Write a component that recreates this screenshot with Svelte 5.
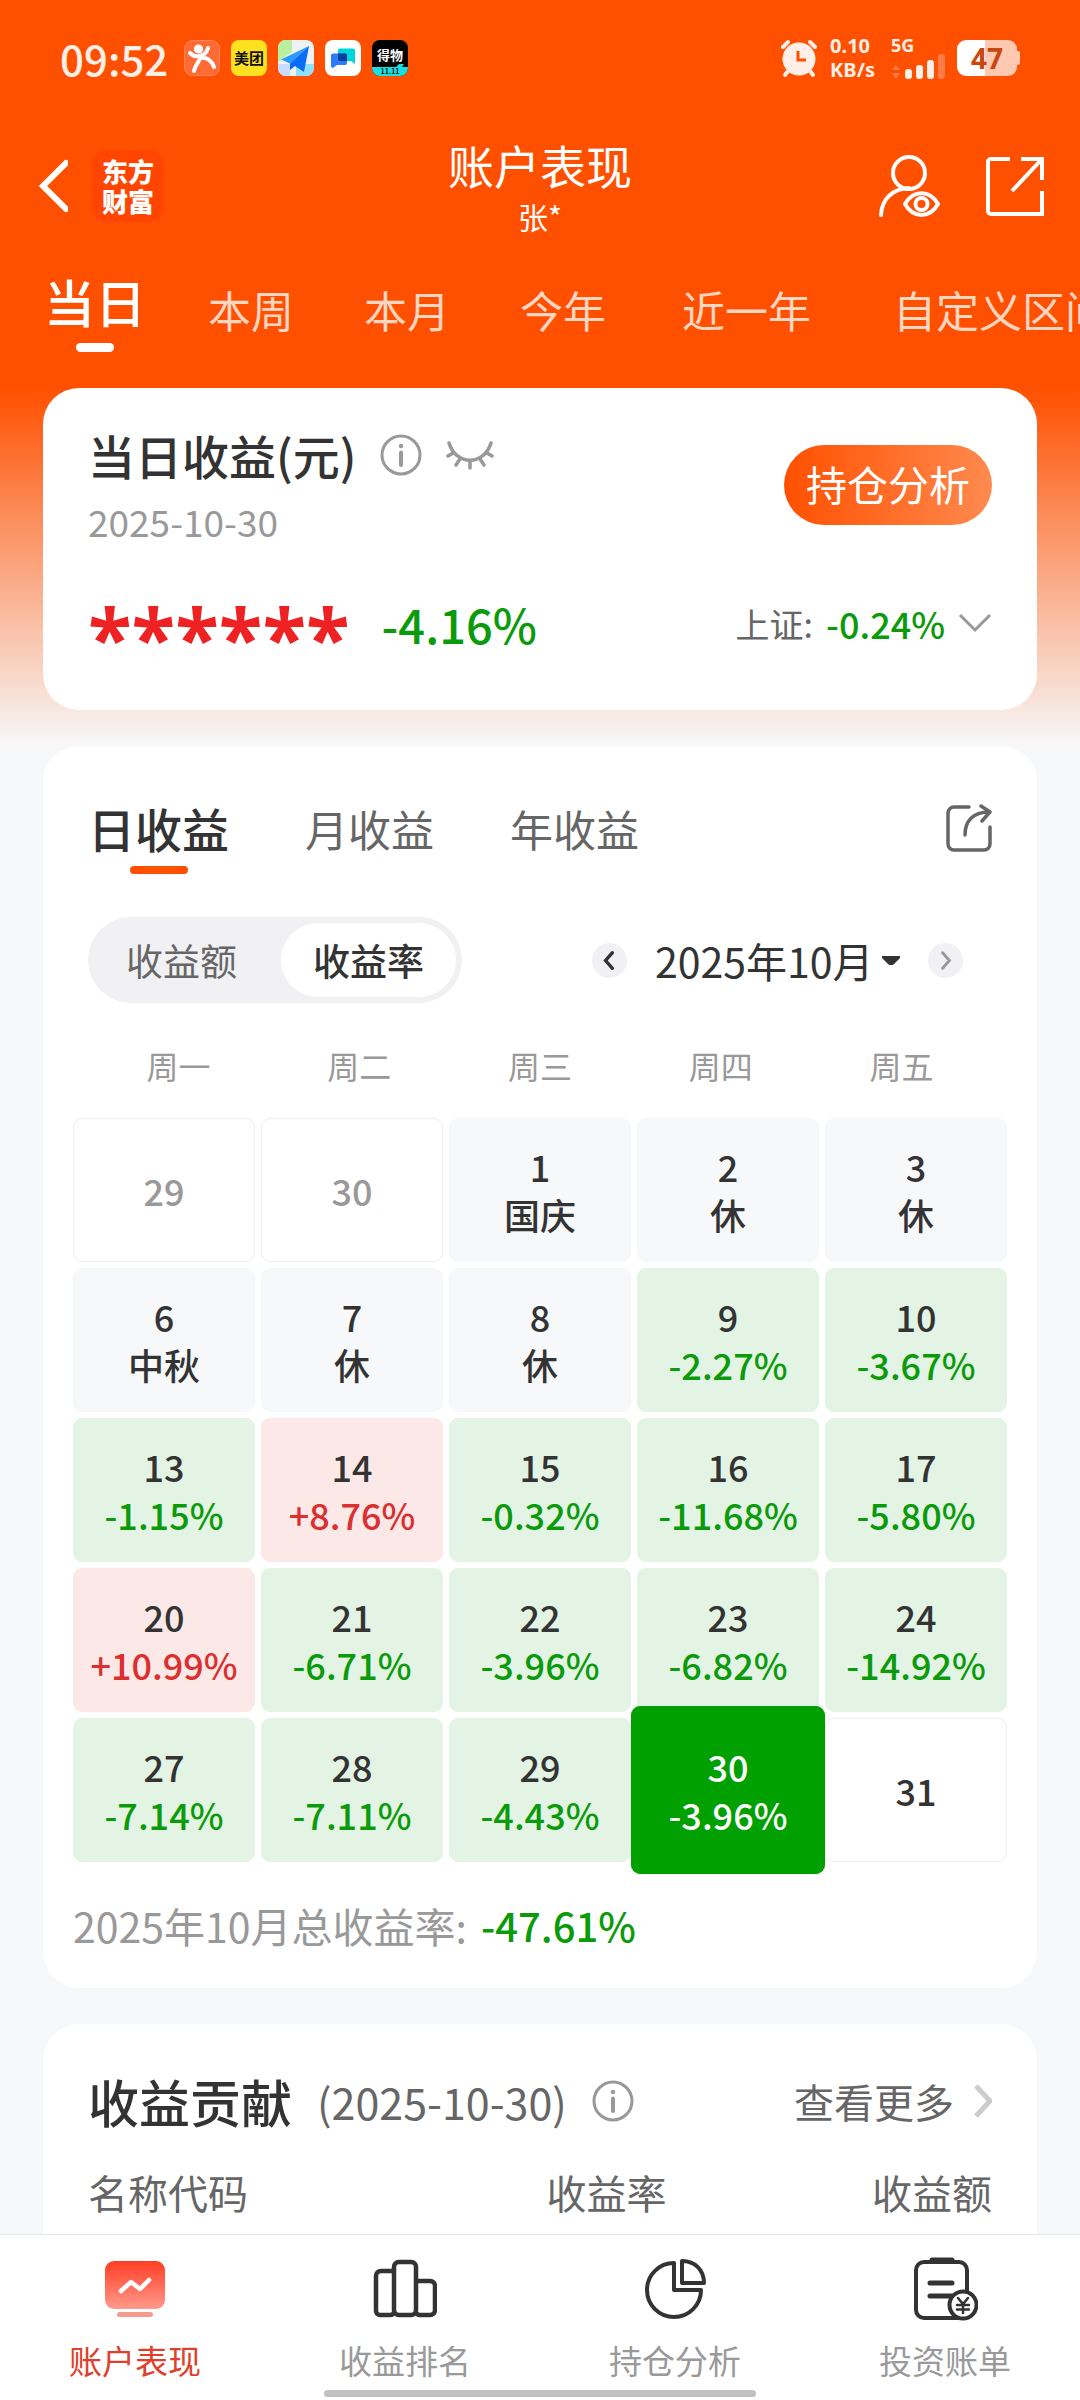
<script lang="ts">
	const ranges = ['当日', '本周', '本月', '今年', '近一年', '自定义区间'];
	const periods = ['日收益', '月收益', '年收益'];
	const modes = ['收益额', '收益率'];
	const weekdays = ['周一', '周二', '周三', '周四', '周五'];

	type Day = { day: number; note?: string; rate?: string; outside?: boolean };

	const days: Day[] = [
		{ day: 29, outside: true },
		{ day: 30, outside: true },
		{ day: 1, note: '国庆' },
		{ day: 2, note: '休' },
		{ day: 3, note: '休' },
		{ day: 6, note: '中秋' },
		{ day: 7, note: '休' },
		{ day: 8, note: '休' },
		{ day: 9, rate: '-2.27%' },
		{ day: 10, rate: '-3.67%' },
		{ day: 13, rate: '-1.15%' },
		{ day: 14, rate: '+8.76%' },
		{ day: 15, rate: '-0.32%' },
		{ day: 16, rate: '-11.68%' },
		{ day: 17, rate: '-5.80%' },
		{ day: 20, rate: '+10.99%' },
		{ day: 21, rate: '-6.71%' },
		{ day: 22, rate: '-3.96%' },
		{ day: 23, rate: '-6.82%' },
		{ day: 24, rate: '-14.92%' },
		{ day: 27, rate: '-7.14%' },
		{ day: 28, rate: '-7.11%' },
		{ day: 29, rate: '-4.43%' },
		{ day: 30, rate: '-3.96%' },
		{ day: 31 }
	];

	let range = $state('当日');
	let period = $state('日收益');
	let mode = $state('收益率');
	let selected = $state(23);

	function dayClass(d: Day): string {
		if (d.outside) return 'outside';
		if (d.note) return 'rest';
		if (!d.rate) return '';
		return d.rate.startsWith('+') ? 'up' : 'down';
	}
</script>

{#snippet infoIcon()}
	<svg width="42" height="42" viewBox="0 0 42 42" fill="none" stroke="#999" stroke-width="3">
		<circle cx="21" cy="21" r="19" />
		<path d="M21 18.500v12.500" stroke-linecap="round" stroke-width="4" />
		<circle cx="21" cy="12" r="2.200" fill="#999" stroke="none" />
	</svg>
{/snippet}

<div class="app">
	<div class="status">
		<div class="status-left">
			<span class="time">09:52</span>
			<svg width="36" height="36" viewBox="0 0 36 36">
				<rect x="0.500" y="0.500" width="35" height="35" rx="8" fill="#ff6a35" stroke="#ff8658" />
				<circle cx="14.500" cy="9" r="4.600" fill="#fff" />
				<path
					d="M6 13c3 3 6 4 10 3 4-1 7-4 8-8M16 16c1 5-5 8-6 15M17 18c6-1 11 3 13 9"
					fill="none"
					stroke="#fff"
					stroke-width="4"
					stroke-linecap="round"
				/>
			</svg>
			<svg width="36" height="36" viewBox="0 0 36 36">
				<rect width="36" height="36" rx="8" fill="#ffe11f" />
				<text class="app-name" x="18" y="24" font-size="15">美团</text>
			</svg>
			<svg width="36" height="36" viewBox="0 0 36 36">
				<rect width="36" height="36" rx="8" fill="#eef1f5" />
				<path d="M8 0h6v12L0 22V8a8 8 0 0 1 8-8z" fill="#b9f0a0" />
				<path d="M18 24h18v4a8 8 0 0 1-8 8H18z" fill="#8fe0ff" />
				<path d="M0 24h12v12H8a8 8 0 0 1-8-8z" fill="#c9dcff" />
				<path d="M31 6L3 19.500l9 4z" fill="#2a9bff" />
				<path d="M31 6L12 23.500V30l5-4 9 6z" fill="#0a6cf5" />
			</svg>
			<svg width="36" height="36" viewBox="0 0 36 36">
				<rect width="36" height="36" rx="8" fill="#fff" />
				<path d="M15 8.500h13a2 2 0 0 1 2 2V24l-4-3H15a2 2 0 0 1-2-2v-8.500a2 2 0 0 1 2-2z" fill="#00d6dc" />
				<path d="M8 13.500h12a2 2 0 0 1 2 2V23a2 2 0 0 1-2 2h-8l-4 3a2 2 0 0 1-2-2V15.500a2 2 0 0 1 2-2z" fill="#2b7cf8" />
				<path d="M13 13.500h7a2 2 0 0 1 2 2V21h-7a2 2 0 0 1-2-2z" fill="#0b3f9c" />
			</svg>
			<svg width="36" height="36" viewBox="0 0 36 36">
				<rect width="36" height="36" rx="8" fill="#000" />
				<path d="M0 27h24l3-3h5l-2 3h6v1a8 8 0 0 1-8 8H8a8 8 0 0 1-8-8z" fill="#19e0e0" />
				<text class="app-name light" x="18" y="20" font-size="13">得物</text>
				<text class="app-name" x="18" y="34" font-size="7">11.11</text>
			</svg>
		</div>
		<div class="status-right">
			<svg width="38" height="38" viewBox="0 0 38 38">
				<circle cx="19" cy="20" r="16.500" fill="#ffefe6" />
				<path
					d="M3 8l5-5M35 8l-5-5M8 32l-3 4M30 32l3 4"
					stroke="#ffefe6"
					stroke-width="4"
					stroke-linecap="round"
				/>
				<path d="M18 12v9h8" fill="none" stroke="#ff5000" stroke-width="3" />
			</svg>
			<div class="speed"><span>0.10</span><span>KB/s</span></div>
			<div class="signal">
				<span>5G</span>
				<svg width="54" height="26" viewBox="0 0 54 26">
					<path d="M5 12l4 5H1zM5 26l4-6H1z" fill="#ff7a45" />
					<g fill="#ffefe6">
						<rect x="14" y="16" width="7" height="10" rx="3" />
						<rect x="25" y="12" width="7" height="14" rx="3" />
						<rect x="36" y="7" width="7" height="19" rx="3" />
					</g>
					<rect x="47" y="1" width="7" height="25" rx="3" fill="#ff7a45" />
				</svg>
			</div>
			<div class="battery">47</div>
		</div>
	</div>

	<header>
		<div class="header-left">
			<button aria-label="返回">
				<svg width="32" height="54" viewBox="0 0 32 54">
					<path d="M30 4L7 27l23 23" fill="none" stroke="#fff" stroke-width="6" stroke-linecap="round" />
				</svg>
			</button>
			<div class="logo"><span>东方</span><span>财富</span></div>
		</div>
		<div class="heading">
			<h1>账户表现</h1>
			<p>张*</p>
		</div>
		<div class="header-right">
			<button aria-label="账户查看">
				<svg width="64" height="64" viewBox="0 0 64 64" fill="none" stroke="#fff" stroke-width="4">
					<circle cx="32" cy="19" r="16" />
					<path d="M4 61C5 44 16 35 32 34" stroke-linecap="round" />
					<path d="M28 50C36 35.500 53 35.500 61 50 53 64.500 36 64.500 28 50z" stroke-linejoin="round" />
					<circle cx="44.500" cy="50" r="6" />
				</svg>
			</button>
			<button aria-label="分享">
				<svg width="58" height="60" viewBox="0 0 58 60" fill="none" stroke="#fff" stroke-width="4">
					<path d="M24 3H5a3 3 0 0 0-3 3v49a3 3 0 0 0 3 3h51V35M35 3h21v21M56 3L26 35" />
				</svg>
			</button>
		</div>
	</header>

	<nav class="ranges">
		{#each ranges as r (r)}
			<button class:active={range === r} class:wide={r.length > 2} onclick={() => (range = r)}>
				{r}
			</button>
		{/each}
	</nav>

	<main>
		<section class="card today">
			<div class="today-top">
				<div class="today-title">
					<div class="title-row">
						<h2>当日收益(元)</h2>
						{@render infoIcon()}
						<button aria-label="显示金额">
							<svg width="48" height="30" viewBox="0 0 48 30" fill="none" stroke="#999" stroke-width="3.500" stroke-linecap="round">
								<path d="M3 3c7 23 35 23 42 0M7 13l-5 3M14 19l-4 6M24 21v7M34 19l4 6M41 13l5 3" />
							</svg>
						</button>
					</div>
					<p class="date">2025-10-30</p>
				</div>
				<button class="analyse">持仓分析</button>
			</div>
			<div class="today-bottom">
				<span class="masked">******</span>
				<span class="rate">-4.16%</span>
				<button class="index">
					<span>上证:</span>
					<b>-0.24%</b>
					<svg width="34" height="20" viewBox="0 0 34 20">
						<path d="M2 2l15 15L32 2" fill="none" stroke="#999" stroke-width="3" />
					</svg>
				</button>
			</div>
		</section>

		<section class="card calendar">
			<div class="periods">
				{#each periods as p (p)}
					<button class:active={period === p} onclick={() => (period = p)}>{p}</button>
				{/each}
				<button class="share" aria-label="分享收益">
					<svg width="46" height="48" viewBox="0 0 46 48" fill="none" stroke="#666" stroke-width="3.500" stroke-linecap="round" stroke-linejoin="round">
						<path d="M23 3H8a6 6 0 0 0-6 6v31a6 6 0 0 0 6 6h30a6 6 0 0 0 6-6V23" />
						<path d="M19 31C19 17 27 8 43 8M35 2l9 6-8 9" />
					</svg>
				</button>
			</div>

			<div class="controls">
				<div class="modes">
					{#each modes as m (m)}
						<button class:active={mode === m} onclick={() => (mode = m)}>{m}</button>
					{/each}
				</div>
				<div class="month">
					<button class="step" aria-label="上个月">
						<svg width="35" height="35" viewBox="0 0 36 36">
							<path d="M21 10l-7 8 7 8" fill="none" stroke="#333" stroke-width="3.500" stroke-linecap="round" />
						</svg>
					</button>
					<div class="month-field">
						<select aria-label="月份">
							<option>2025年10月</option>
						</select>
						<svg width="18" height="9" viewBox="0 0 18 9">
							<path d="M0 0h18v2l-6 6a4 4 0 0 1-6 0L0 2z" fill="#333" />
						</svg>
					</div>
					<button class="step" aria-label="下个月">
						<svg width="35" height="35" viewBox="0 0 36 36">
							<path d="M15 10l7 8-7 8" fill="none" stroke="#999" stroke-width="3" stroke-linecap="round" />
						</svg>
					</button>
				</div>
			</div>

			<div class="weekdays">
				{#each weekdays as w (w)}
					<span>{w}</span>
				{/each}
			</div>
			<div class="days">
				{#each days as d, i (i)}
					<button class="day {dayClass(d)}" class:selected={selected === i} onclick={() => (selected = i)}>
						<span>{d.day}</span>
						{#if d.note}<span>{d.note}</span>{/if}
						{#if d.rate}<span class="value">{d.rate}</span>{/if}
					</button>
				{/each}
			</div>
			<p class="total"><span>2025年10月总收益率:</span><b>-47.61%</b></p>
		</section>

		<section class="card contribution">
			<div class="title-row">
				<h2>收益贡献</h2>
				<span class="sub">(2025-10-30)</span>
				{@render infoIcon()}
				<a href="#more">
					查看更多
					<svg width="18" height="34" viewBox="0 0 18 34">
						<path d="M2 2l14 15L2 32" fill="none" stroke="#ccc" stroke-width="5" />
					</svg>
				</a>
			</div>
			<table>
				<thead>
					<tr><th>名称代码</th><th>收益率</th><th>收益额</th></tr>
				</thead>
			</table>
		</section>
	</main>

	<footer>
		<nav class="tabbar">
			<a class="current" href="#performance">
				<svg width="64" height="64" viewBox="0 0 64 64">
					<defs>
						<linearGradient id="screen" x1="0" y1="0" x2="0" y2="1">
							<stop offset="0" stop-color="#ff3d24" />
							<stop offset="1" stop-color="#ff9a8c" />
						</linearGradient>
					</defs>
					<rect x="2" y="4" width="60" height="48" rx="9" fill="url(#screen)" />
					<path d="M18 34l10-9 9 7 9-9" fill="none" stroke="#fff" stroke-width="4.500" stroke-linecap="round" stroke-linejoin="round" />
					<rect x="14" y="55" width="36" height="5" rx="2.500" fill="#f79a90" />
				</svg>
				账户表现
			</a>
			<a href="#ranking">
				<svg width="64" height="64" viewBox="0 0 64 64" fill="none" stroke="#333" stroke-width="4.500">
					<path d="M21 14H8a5 5 0 0 0-5 5v35a4 4 0 0 0 4 4h10a4 4 0 0 0 4-3" />
					<rect x="21" y="5" width="22" height="53" rx="5" />
					<path d="M43 24h14a5 5 0 0 1 5 5v24a5 5 0 0 1-5 5H47a4 4 0 0 1-4-3" />
				</svg>
				收益排名
			</a>
			<a href="#holdings">
				<svg width="64" height="64" viewBox="0 0 64 64" fill="none" stroke="#333" stroke-width="4" stroke-linejoin="round">
					<path d="M31 6A27 27 0 1 0 58 33H31z" />
					<path d="M39 4v22h22C61 13 52 4 39 4z" />
				</svg>
				持仓分析
			</a>
			<a href="#bill">
				<svg width="66" height="64" viewBox="0 0 66 64" fill="none" stroke="#333" stroke-width="4" stroke-linecap="round">
					<rect x="4" y="5" width="51" height="56" rx="8" />
					<path d="M20 3h20" stroke-width="5" />
					<path d="M18 26h22M18 39h22" stroke-width="5" />
					<circle cx="51" cy="48" r="13.500" fill="#fff" />
					<path d="M46 41l5 6 5-6M51 47v9M45 48h12M45 52.500h12" stroke-width="2.500" />
				</svg>
				投资账单
			</a>
		</nav>
		<div class="home-bar"></div>
	</footer>
</div>

<style>
	:global(body) {
		margin: 0;
	}

	.app {
		min-height: 100vh;
		display: flex;
		flex-direction: column;
		background: linear-gradient(#ff5000 388px, #f7f8fa 746px);
		font-family: 'Noto Sans CJK SC', 'Noto Sans', sans-serif;
		color: #333;
	}

	h1,
	h2,
	p {
		margin: 0;
		font-weight: 400;
	}

	b {
		font-weight: 500;
	}

	button {
		padding: 0;
		border: 0;
		background: none;
		font: inherit;
		color: inherit;
	}

	a {
		color: inherit;
		text-decoration: none;
	}

	svg {
		display: block;
		flex: none;
	}

	.status {
		height: 116px;
		padding: 0 60px;
		display: flex;
		align-items: center;
		justify-content: space-between;
		color: #ffefe6;
	}

	.status-left {
		display: flex;
		align-items: center;
		gap: 11px;
	}

	.time {
		margin-right: 5px;
		font-size: 42px;
		line-height: 52px;
		font-weight: 500;
	}

	.app-name {
		text-anchor: middle;
		font-weight: 700;
		fill: #111;
	}

	.app-name.light {
		fill: #fff;
	}

	.status-right {
		display: flex;
		align-items: center;
		gap: 12px;
		font-family: 'Noto Sans', sans-serif;
		font-weight: 700;
	}

	.speed {
		display: flex;
		flex-direction: column;
		padding-right: 4px;
		font-size: 20px;
		line-height: 24px;
	}

	.signal {
		display: flex;
		flex-direction: column;
		font-size: 18px;
		line-height: 16px;
	}

	.battery {
		width: 60px;
		height: 36px;
		border-radius: 9px;
		background: linear-gradient(90deg, #fff 47%, #ffc8b0 47%);
		font-size: 28px;
		line-height: 36px;
		text-align: center;
		color: #c8460f;
	}

	.status-right::after {
		content: '';
		width: 3px;
		height: 14px;
		margin-left: -12px;
		border-radius: 0 2px 2px 0;
		background: #ffc8b0;
	}

	header {
		height: 140px;
		padding: 0 36px;
		display: grid;
		grid-template-columns: 1fr auto 1fr;
		align-items: center;
		color: #fff;
	}

	.header-left,
	.header-right {
		display: flex;
		align-items: center;
	}

	.header-left {
		gap: 24px;
	}

	.header-right {
		justify-content: flex-end;
		gap: 45px;
	}

	.logo {
		width: 72px;
		height: 72px;
		display: flex;
		flex-direction: column;
		align-items: center;
		justify-content: center;
		border-radius: 14px;
		background: #ff4500;
		font-size: 26px;
		line-height: 30px;
		font-weight: 900;
	}

	.heading {
		text-align: center;
	}

	.heading h1 {
		font-size: 46px;
		line-height: 60px;
	}

	.heading p {
		font-size: 30px;
		line-height: 44px;
	}

	.ranges {
		height: 123px;
		padding: 9px 0 0 17px;
		display: flex;
		align-items: flex-start;
		overflow: hidden;
	}

	.ranges button {
		flex: none;
		min-width: 156px;
		font-size: 43px;
		line-height: 88px;
		color: #ffd6c2;
	}

	.ranges .wide {
		padding: 0 41px;
	}

	.ranges .active {
		font-size: 51px;
		line-height: 72px;
		font-weight: 500;
		color: #fff;
	}

	.ranges .active::after {
		content: '';
		display: block;
		width: 38px;
		height: 9px;
		margin: 6px auto 0;
		border-radius: 5px;
		background: #fff;
	}

	main {
		flex: 1;
		display: flex;
		flex-direction: column;
		gap: 36px;
		padding: 0 43px;
	}

	.card {
		border-radius: 36px;
		background: #fff;
	}

	.today {
		padding: 37px 45px 34px;
	}

	.today-top,
	.title-row,
	.today-bottom,
	.index {
		display: flex;
		align-items: center;
	}

	.today-top {
		justify-content: space-between;
	}

	.today h2 {
		margin-right: 24px;
		font-size: 47px;
		line-height: 60px;
		font-weight: 500;
	}

	.title-row button {
		margin-left: 24px;
	}

	.date {
		margin-top: 12px;
		font-size: 37px;
		line-height: 48px;
		color: #999;
	}

	.analyse {
		width: 208px;
		height: 80px;
		padding-bottom: 4px;
		border-radius: 40px;
		background: linear-gradient(90deg, #ff5000, #ff8a4f);
		font-size: 41px;
		color: #fff;
	}

	.today-bottom {
		margin-top: 25px;
	}

	.masked {
		padding-top: 26px;
		font-family: 'Open Sans', sans-serif;
		font-size: 80px;
		line-height: 80px;
		font-weight: 700;
		color: #ee2222;
	}

	.rate {
		margin-left: 32px;
		font-size: 47px;
		font-weight: 500;
		color: #0a9a0a;
	}

	.index {
		margin-left: auto;
		gap: 13px;
		font-size: 36px;
		color: #666;
	}

	.index span {
		font-size: 34px;
	}

	b {
		color: #0a9a0a;
	}

	.calendar {
		padding: 46px 30px 33px;
	}

	.periods {
		display: flex;
		align-items: flex-start;
		gap: 76px;
		padding: 0 15px;
		font-size: 43px;
		line-height: 72px;
		color: #666;
	}

	.periods .active {
		font-size: 47px;
		font-weight: 500;
		color: #333;
	}

	.periods .active::after {
		content: '';
		display: block;
		width: 58px;
		height: 8px;
		margin: 2px auto 0;
		border-radius: 4px;
		background: #ff5000;
	}

	.periods .share {
		height: 72px;
		margin-left: auto;
	}

	.controls {
		display: flex;
		align-items: center;
		justify-content: space-between;
		margin-top: 43px;
		padding: 0 44px 0 15px;
	}

	.modes {
		height: 86px;
		padding: 6px;
		box-sizing: border-box;
		display: flex;
		gap: 12px;
		border-radius: 43px;
		background: #f1f1f4;
		font-size: 37px;
		color: #666;
	}

	.modes button {
		padding: 0 32px;
		border-radius: 37px;
	}

	.modes .active {
		background: #fff;
		font-weight: 500;
		color: #333;
	}

	.month {
		display: flex;
		align-items: center;
		gap: 28px;
	}

	.month-field {
		display: flex;
		align-items: center;
		gap: 8px;
	}

	select {
		appearance: none;
		padding: 0;
		border: 0;
		background: none;
		font: inherit;
		font-size: 41px;
		color: #333;
	}

	.step {
		border-radius: 50%;
		background: #f1f1f4;
	}

	.weekdays {
		display: grid;
		grid-template-columns: repeat(5, 1fr);
		margin: 38px 15px 29px;
		text-align: center;
		font-size: 32px;
		line-height: 48px;
		color: #999;
	}

	.days {
		display: grid;
		grid-template-columns: repeat(5, 1fr);
		grid-auto-rows: 144px;
		gap: 6px;
	}

	.day {
		display: flex;
		flex-direction: column;
		align-items: center;
		justify-content: center;
		border: 1px solid #eee;
		border-radius: 9px;
		font-size: 36px;
		line-height: 48px;
		font-weight: 500;
	}

	.outside {
		color: #999;
	}

	.rest {
		border-color: #f7f8fa;
		background: #f7f8fa;
	}

	.down {
		border-color: #e3f4e4;
		background: #e3f4e4;
	}

	.up {
		border-color: #fde8e8;
		background: #fde8e8;
	}

	.down .value {
		color: #0a9a0a;
	}

	.up .value {
		color: #dc2f2f;
	}

	/* the picked day grows over its neighbours */
	.selected,
	.selected .value {
		color: #fff;
	}

	.selected {
		z-index: 1;
		margin: -12px -6px;
		border-color: #00a000;
		background: #00a000;
	}

	.total {
		display: flex;
		gap: 14px;
		margin-top: 33px;
		font-size: 41px;
		line-height: 60px;
		color: #999;
	}

	.total b {
		font-size: 40px;
	}

	.contribution {
		flex: 1;
		padding: 41px 45px 12px;
		border-radius: 36px 36px 0 0;
	}

	.contribution h2 {
		font-size: 51px;
		line-height: 72px;
		font-weight: 500;
	}

	.sub {
		margin: 0 25px;
		font-size: 43px;
		color: #666;
	}

	.contribution a {
		display: flex;
		align-items: center;
		gap: 20px;
		margin-left: auto;
		font-size: 40px;
		color: #666;
	}

	table {
		width: 100%;
		margin-top: 25px;
		border-collapse: collapse;
		table-layout: fixed;
	}

	th {
		padding: 0;
		font-size: 40px;
		line-height: 60px;
		font-weight: 400;
		text-align: right;
		color: #666;
	}

	th:first-child {
		width: 28%;
		text-align: left;
	}

	footer {
		border-top: 1px solid #e8e9eb;
		background: #fff;
	}

	.tabbar {
		display: grid;
		grid-template-columns: repeat(4, 1fr);
		padding-top: 22px;
	}

	.tabbar a {
		display: flex;
		flex-direction: column;
		align-items: center;
		gap: 15px;
		font-size: 33px;
		line-height: 48px;
		color: #999;
	}

	.tabbar .current {
		color: #e0402a;
	}

	.home-bar {
		width: 40%;
		height: 7px;
		margin: 6px auto 3px;
		border-radius: 4px;
		background: #c1c1c1;
	}
</style>
